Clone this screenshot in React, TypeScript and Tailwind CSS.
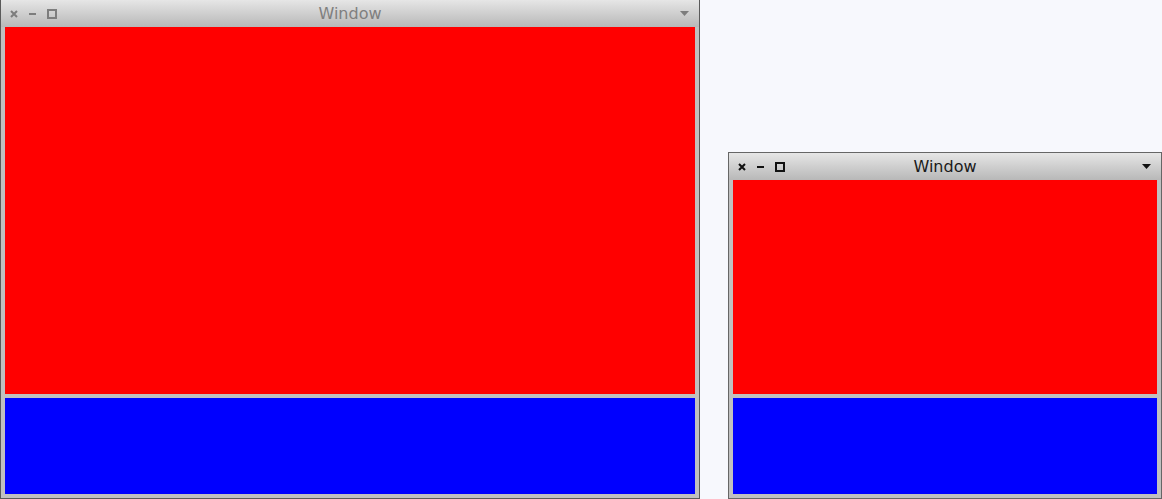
import React, { type FC } from 'react';

type WindowProps = {
  readonly active: boolean;
  readonly className: string;
};

const TitleButtons: FC<{ active: boolean }> = ({ active }) => {
  const color = active ? '#111111' : '#7d7d7d';
  return (
    <div className="flex items-center gap-[10px] pl-[9px]">
      <svg width="8" height="8" viewBox="0 0 8 8" aria-hidden="true">
        <path d="M1 1L7 7M7 1L1 7" stroke={color} strokeWidth="2" />
      </svg>
      <svg width="9" height="8" viewBox="0 0 9 8" aria-hidden="true">
        <path d="M1 4H8" stroke={color} strokeWidth="2" />
      </svg>
      <svg width="10" height="10" viewBox="0 0 10 10" aria-hidden="true">
        <rect x="1" y="1" width="8" height="8" fill="none" stroke={color} strokeWidth="2" />
      </svg>
    </div>
  );
};

const AppWindow: FC<WindowProps> = ({ active, className }) => (
  <div
    className={`absolute flex flex-col border bg-[#c0c0c0] ${
      active ? 'border-[#666666]' : 'border-[#5a5a5a]'
    } ${className}`}
  >
    <div className="relative flex h-[27px] shrink-0 items-center bg-gradient-to-b from-[#e6e6e6] to-[#b8b8b8]">
      <TitleButtons active={active} />
      <span
        className={`absolute inset-0 flex items-center justify-center text-[16px] font-['DejaVu_Sans',sans-serif] ${
          active ? 'text-[#1a1a1a]' : 'text-[#7f7f7f]'
        }`}
      >
        Window
      </span>
      <svg
        className="absolute right-[10px] top-[11px]"
        width="9"
        height="5"
        viewBox="0 0 9 5"
        aria-hidden="true"
      >
        <path d="M0 0H9L4.5 5Z" fill={active ? '#111111' : '#7d7d7d'} />
      </svg>
    </div>
    <div className="flex flex-1 flex-col gap-[4px] px-[4px] pb-[4px]">
      <div className="flex-1 bg-[#ff0000]" />
      <div className="h-[96px] shrink-0 bg-[#0000ff]" />
    </div>
  </div>
);

const App: FC = () => (
  <div className="relative h-[499px] w-[1162px] overflow-hidden bg-[#f7f8fd]">
    <AppWindow active={false} className="left-0 top-[-1px] h-[500px] w-[700px]" />
    <AppWindow active className="left-[728px] top-[152px] h-[347px] w-[434px]" />
  </div>
);

export default App;
